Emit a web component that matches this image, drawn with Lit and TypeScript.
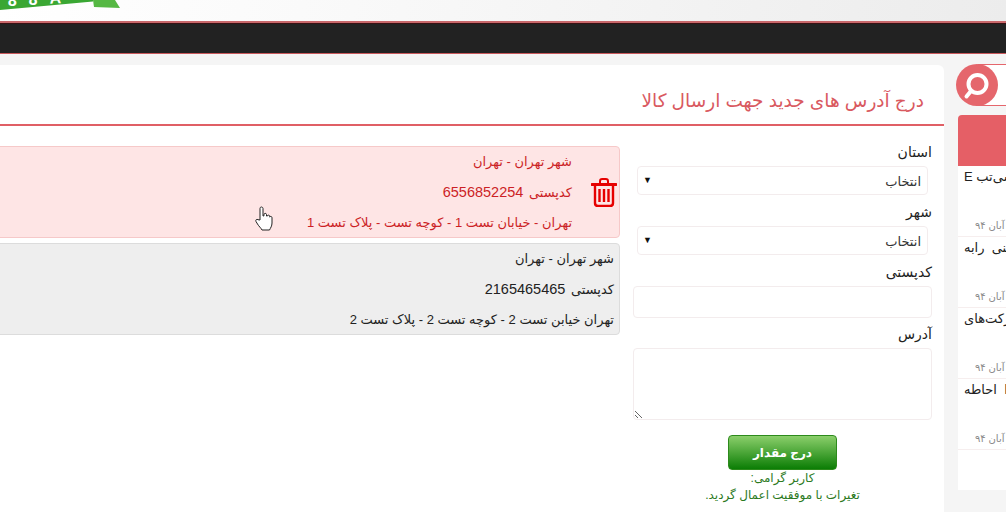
import { LitElement, html, css, svg } from 'lit';
import { customElement } from 'lit/decorators.js';

const trash = svg`<path d="M9 5V3.2C9 2 10 1 11.2 1h3.6C16 1 17 2 17 3.2V5" fill="none" stroke="currentColor" stroke-width="2"/>
  <path d="M1 6.5h24" stroke="currentColor" stroke-width="3" stroke-linecap="round"/>
  <path d="M4 8v17c0 1.8 1.2 3 3 3h12c1.8 0 3-1.2 3-3V8" fill="none" stroke="currentColor" stroke-width="2.4"/>
  <path d="M8.500 11v13M13 11v13M17.500 11v13" stroke="currentColor" stroke-width="2.4"/>`;

const items = [
  { title: 'لپ تاپ پیشرفته سی‌تب E', date: '۱۲ آبان ۹۴' },
  { title: 'گوشی همراه فنی  رابه', date: '۱۲ آبان ۹۴' },
  { title: 'همکاری با شرکت‌های', date: '۱۲ آبان ۹۴' },
  { title: 'بازار جهانی را  احاطه', date: '۱۲ آبان ۹۴' },
];

@customElement('app-root')
export class AppRoot extends LitElement {
  static styles = css`
    :host {
      display: block;
      position: relative;
      width: 1006px;
      height: 512px;
      overflow: hidden;
      background: #f5f5f5;
      font-family: "Liberation Sans", "DejaVu Sans", "Noto Sans", sans-serif;
      font-size: 13px;
      color: #222;
    }
    .header {
      height: 21px;
      background: linear-gradient(100deg, #fff 0%, #fafafa 30%, #ececec 100%);
      overflow: hidden;
    }
    .logo { display: block; }
    .nav {
      height: 30px;
      background: #222;
      border-top: 2px solid #c9686b;
      border-bottom: 1px solid #c9585c;
      box-shadow: inset 0 1px 0 #3a1114;
    }
    .page {
      display: flex;
      gap: 12px;
      padding-top: 11px;
      height: 447px;
    }
    .main {
      width: 944px;
      flex: none;
      background: #fff;
      border-top-right-radius: 6px;
      overflow: hidden;
    }
    .title {
      direction: rtl;
      height: 59px;
      border-bottom: 2px solid #e05f65;
      padding-right: 20px;
      font-size: 18.5px;
      line-height: 72px;
      color: #d9595f;
      white-space: nowrap;
    }
    .content {
      display: flex;
      flex-direction: row-reverse;
      gap: 13px;
      padding: 16px 12px 0 0;
    }
    .form {
      direction: rtl;
      width: 299px;
      flex: none;
      display: flex;
      flex-direction: column;
    }
    label {
      height: 20px;
      line-height: 20px;
      font-size: 14px;
      margin-bottom: 4px;
      color: #222;
    }
    .sel {
      position: relative;
      height: 29px;
      margin: 0 4px 7px 4px;
    }
    .sel::after {
      content: "▼";
      position: absolute;
      left: 6px;
      top: 9px;
      font-size: 9px;
      line-height: 10px;
      color: #111;
      pointer-events: none;
    }
    select {
      appearance: none;
      box-sizing: border-box;
      display: block;
      width: 100%;
      height: 29px;
      padding: 2px 6px 0 0;
      font: inherit;
      font-size: 13px;
      color: #333;
      background: #fff;
      border: 1px solid #f3eced;
      border-radius: 4px;
    }
    input, textarea {
      box-sizing: border-box;
      width: 299px;
      margin: 0 0 6px;
      border: 1px solid #f3eced;
      border-radius: 4px;
      background: #fff;
      font: inherit;
    }
    input { height: 32px; }
    textarea { height: 72px; display: block; margin-bottom: 0; }
    .submit {
      align-self: center;
      width: 109px;
      height: 35px;
      margin-top: 15px;
      border: 1px solid #2d8a1c;
      border-radius: 4px;
      background: linear-gradient(#8bcf6b, #0b7d05);
      color: #fff;
      font: bold 12px "Liberation Sans", "DejaVu Sans", sans-serif;
    }
    .message {
      text-align: center;
      line-height: 17px;
      font-size: 12px;
      color: #2c7a1e;
    }
    .cards {
      flex: 1;
      direction: rtl;
      display: flex;
      flex-direction: column;
      gap: 5px;
      margin: 4px 0 0 -10px;
    }
    .card {
      display: flex;
      align-items: center;
      height: 90px;
      border: 1px solid #dcdcdc;
      border-radius: 4px;
      background: #eee;
      padding-right: 5px;
      color: #222;
    }
    .card p { margin: 0; line-height: 30px; white-space: nowrap; }
    .num { font-size: 14.5px; margin-right: 2px; }
    .card.selected {
      background: #fee5e5;
      border-color: #f6c9c9;
      color: #cc1f26;
      padding-right: 2px;
    }
    .card.selected svg {
      flex: none;
      color: #e60000;
      margin-left: 19px;
    }
    .side {
      flex: 1;
      min-width: 0;
      display: flex;
      flex-direction: column;
    }
    .search {
      position: relative;
      height: 42px;
      margin: -1px 0 9px;
    }
    .search .box {
      height: 40px;
      margin-left: 22px;
      background: #fff;
      border: solid #e5666c;
      border-width: 1px 0;
    }
    .search svg { position: absolute; left: 0; top: 0; }
    .red {
      height: 51px;
      margin-left: 2px;
      background: #e55f66;
      border-top-left-radius: 4px;
    }
    .list {
      margin-left: 2px;
      height: 324px;
      background: #fff;
      overflow: hidden;
    }
    .item {
      box-sizing: border-box;
      height: 71px;
      padding: 3px 0 0 6px;
      border-bottom: 1px solid #f6eeee;
      width: 300px;
    }
    .item .t {
      text-align: left;
      white-space: pre;
      direction: rtl;
      font-size: 13px;
      line-height: 16px;
      color: #222;
    }
    .item .d {
      direction: rtl;
      text-align: left;
      margin: 34px 0 0 11px;
      width: 50px;
      overflow: hidden;
      white-space: nowrap;
      font-size: 10px;
      line-height: 14px;
      color: #888;
    }
    .cursor {
      position: absolute;
      left: 255px;
      top: 206px;
      pointer-events: none;
    }
  `;

  render() {
    return html`
      <div class="header">
        <svg class="logo" width="130" height="21" viewBox="0 0 130 21">
          <path d="M0 10 L93 1.500 L93 0 L0 0Z" fill="#3aa733" />
          <path d="M93 0h22l5 8-26-1z" fill="#55b843" />
          <text x="8" y="6" font-size="16" font-weight="bold" fill="#fff" letter-spacing="12" transform="rotate(-3 8 6)" font-family="Liberation Sans">88A</text>
        </svg>
      </div>
      <div class="nav"></div>
      <div class="page">
        <div class="main">
          <div class="title">درج آدرس های جدید جهت ارسال کالا</div>
          <div class="content">
            <div class="form">
              <label>استان</label>
              <div class="sel"><select dir="rtl"><option>انتخاب</option></select></div>
              <label>شهر</label>
              <div class="sel"><select dir="rtl"><option>انتخاب</option></select></div>
              <label>کدپستی</label>
              <input type="text" />
              <label>آدرس</label>
              <textarea></textarea>
              <button class="submit">درج مقدار</button>
              <div class="message">کاربر گرامی:<br />تغیرات با موفقیت اعمال گردید.</div>
            </div>
            <div class="cards">
              <div class="card selected">
                <svg width="26" height="29" viewBox="0 0 26 29">${trash}</svg>
                <div>
                  <p>شهر تهران - تهران</p>
                  <p>کدپستی <span class="num">6556852254</span></p>
                  <p>تهران - خیابان تست 1 - کوچه تست - پلاک تست 1</p>
                </div>
              </div>
              <div class="card">
                <div>
                  <p>شهر تهران - تهران</p>
                  <p>کدپستی <span class="num">2165465465</span></p>
                  <p>تهران خیابن تست 2 - کوچه تست 2 - پلاک تست 2</p>
                </div>
              </div>
            </div>
          </div>
        </div>
        <div class="side">
          <div class="search">
            <div class="box"></div>
            <svg width="42" height="42" viewBox="0 0 42 42">
              <circle cx="21" cy="21" r="21" fill="#e5666c" />
              <circle cx="21.500" cy="20" r="9" fill="none" stroke="#fff" stroke-width="4" />
              <path d="M15 27 L10.500 32.500" stroke="#fff" stroke-width="4" stroke-linecap="round" />
            </svg>
          </div>
          <div class="red"></div>
          <div class="list">
            ${items.map(
              (i) => html`<div class="item">
                <div class="t">${i.title}</div>
                <div class="d">${i.date}</div>
              </div>`,
            )}
          </div>
        </div>
      </div>
      <svg class="cursor" width="19" height="25" viewBox="0 0 19 25">
        <path d="M5 14V2.500C5 1.500 5.700 1 6.400 1S8 1.500 8 2.500V10l1-.2V8.500c0-1.500 2.500-1.500 2.500 0V10l.8 .1c0-1.300 2.400-1.300 2.400 .2v.8c.2-1 2.300-1 2.300 .6V17c0 3-1.500 5-2.500 7H7c-1-2-3-3.500-4.500-6L1 15.500c-.8-1.500 .8-2.800 2-1.800Z" fill="#fff" stroke="#222" stroke-width="1" stroke-linejoin="round" />
      </svg>
    `;
  }
}
